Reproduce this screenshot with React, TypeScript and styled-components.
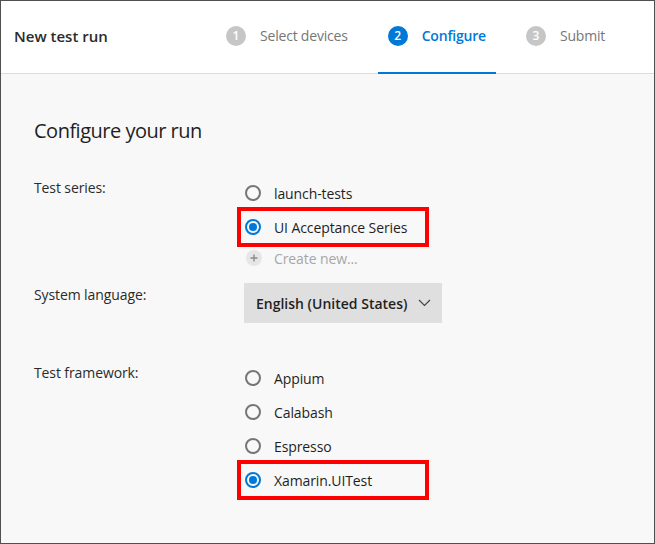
import React from "react";
import styled, { createGlobalStyle } from "styled-components";

const Global = createGlobalStyle`
  html, body { margin: 0; padding: 0; background: #ffffff; }
  * { box-sizing: border-box; }
  body { font-family: "Segoe UI", "Open Sans", "Noto Sans", sans-serif; }
`;

const Frame = styled.div`
  width: 655px;
  height: 544px;
  border: 1px solid #505050;
  background: #f8f8f8;
  display: flex;
  flex-direction: column;
  overflow: hidden;
`;

const Header = styled.header`
  height: 73px;
  flex: none;
  background: #ffffff;
  border-bottom: 1px solid #dcdcdc;
  display: flex;
  align-items: stretch;
  padding: 0 0 3px 13px;
`;

const Title = styled.h1`
  margin: 0;
  font-size: 15px;
  font-weight: 600;
  color: #2b2b2b;
  display: flex;
  align-items: center;
  width: 202px;
  letter-spacing: 0;
`;

const Steps = styled.nav`
  display: flex;
  gap: 20px;
  align-items: stretch;
`;

const Step = styled.div<{ $active?: boolean }>`
  position: relative;
  display: flex;
  align-items: center;
  gap: 14px;
  padding: 0 10px;
  font-size: 14px;
  font-weight: ${(p) => (p.$active ? 600 : 400)};
  color: ${(p) => (p.$active ? "#0078d7" : "#767676")};
  letter-spacing: -0.2px;
  &::after {
    content: "";
    display: ${(p) => (p.$active ? "block" : "none")};
    position: absolute;
    left: 0;
    right: 0;
    bottom: -4px;
    height: 2px;
    background: #0078d7;
  }
`;

const StepNum = styled.span<{ $active?: boolean }>`
  width: 20px;
  height: 20px;
  border-radius: 50%;
  background: ${(p) => (p.$active ? "#0078d7" : "#c6c6c6")};
  color: #ffffff;
  font-size: 12px;
  font-weight: 600;
  display: flex;
  align-items: center;
  justify-content: center;
  letter-spacing: 0;
`;

const Body = styled.main`
  padding: 43px 0 0 33px;
`;

const Heading = styled.h2`
  margin: 0 0 31px;
  font-size: 20px;
  line-height: 28px;
  font-weight: 400;
  color: #1f1f1f;
  letter-spacing: -0.5px;
`;

const Form = styled.div`
  display: grid;
  grid-template-columns: 211px 1fr;
`;

const Label = styled.div`
  font-size: 14px;
  line-height: 20px;
  color: #2b2b2b;
  padding-top: 2px;
  letter-spacing: -0.1px;
`;

const Group = styled.div<{ $gap?: number }>`
  display: flex;
  flex-direction: column;
  margin-bottom: ${(p) => p.$gap ?? 0}px;
`;

const RadioRow = styled.label<{ $highlight?: boolean }>`
  display: flex;
  align-items: center;
  gap: 13px;
  height: 34px;
  font-size: 14px;
  color: #1f1f1f;
  letter-spacing: -0.1px;
  ${(p) =>
    p.$highlight
      ? `
    margin-left: -5px;
    padding-left: 5px;
    width: 186px;
    outline: 4px solid #ff0000;
    outline-offset: -1px;
  `
      : ""}
`;

const RadioDot = styled.span<{ $checked?: boolean }>`
  width: 16px;
  height: 16px;
  flex: none;
  border-radius: 50%;
  border: 2px solid ${(p) => (p.$checked ? "#0078d7" : "#767676")};
  display: flex;
  align-items: center;
  justify-content: center;
  &::after {
    content: "";
    display: ${(p) => (p.$checked ? "block" : "none")};
    width: 8px;
    height: 8px;
    border-radius: 50%;
    background: #0078d7;
  }
`;

const CreateRow = styled.div`
  display: flex;
  align-items: center;
  gap: 12px;
  height: 30px;
  padding-left: 1px;
  margin-top: -1px;
  font-size: 14px;
  color: #a6a6a6;
  letter-spacing: -0.1px;
`;

const PlusCircle = styled.span`
  width: 16px;
  height: 16px;
  border-radius: 50%;
  background: #e6e6e6;
  display: flex;
  align-items: center;
  justify-content: center;
`;

const Dropdown = styled.button`
  justify-self: start;
  display: flex;
  align-items: center;
  justify-content: space-between;
  height: 40px;
  width: 198px;
  margin-left: -1px;
  padding: 0 11px 0 12px;
  border: none;
  background: #dfdfdf;
  font-family: inherit;
  font-size: 14px;
  font-weight: 600;
  color: #1f1f1f;
  white-space: nowrap;
  letter-spacing: 0;
  margin-bottom: 38px;
`;

type Opt = { label: string; checked?: boolean; highlight?: boolean };

const Radio = ({ label, checked, highlight }: Opt) => (
  <RadioRow $highlight={highlight}>
    <RadioDot $checked={checked} />
    <span>{label}</span>
  </RadioRow>
);

export default function App() {
  const series: Opt[] = [
    { label: "launch-tests" },
    { label: "UI Acceptance Series", checked: true, highlight: true },
  ];
  const frameworks: Opt[] = [
    { label: "Appium" },
    { label: "Calabash" },
    { label: "Espresso" },
    { label: "Xamarin.UITest", checked: true, highlight: true },
  ];
  return (
    <>
      <Global />
      <Frame>
        <Header>
          <Title>New test run</Title>
          <Steps>
            <Step>
              <StepNum>1</StepNum>
              Select devices
            </Step>
            <Step $active>
              <StepNum $active>2</StepNum>
              Configure
            </Step>
            <Step>
              <StepNum>3</StepNum>
              Submit
            </Step>
          </Steps>
        </Header>
        <Body>
          <Heading>Configure your run</Heading>
          <Form>
            <Label>Test series:</Label>
            <Group $gap={10}>
              {series.map((o) => (
                <Radio key={o.label} {...o} />
              ))}
              <CreateRow>
                <PlusCircle>
                  <svg width="8" height="8" viewBox="0 0 8 8">
                    <path d="M4 0.5v7M0.5 4h7" stroke="#8a8a8a" strokeWidth="1.4" />
                  </svg>
                </PlusCircle>
                Create new...
              </CreateRow>
            </Group>
            <Label>System language:</Label>
            <Dropdown>
              <span>English (United States)</span>
              <svg width="13" height="8" viewBox="0 0 13 8">
                <path d="M1 1l5.5 5.5L12 1" fill="none" stroke="#444" strokeWidth="1.2" />
              </svg>
            </Dropdown>
            <Label>Test framework:</Label>
            <Group>
              {frameworks.map((o) => (
                <Radio key={o.label} {...o} />
              ))}
            </Group>
          </Form>
        </Body>
      </Frame>
    </>
  );
}
